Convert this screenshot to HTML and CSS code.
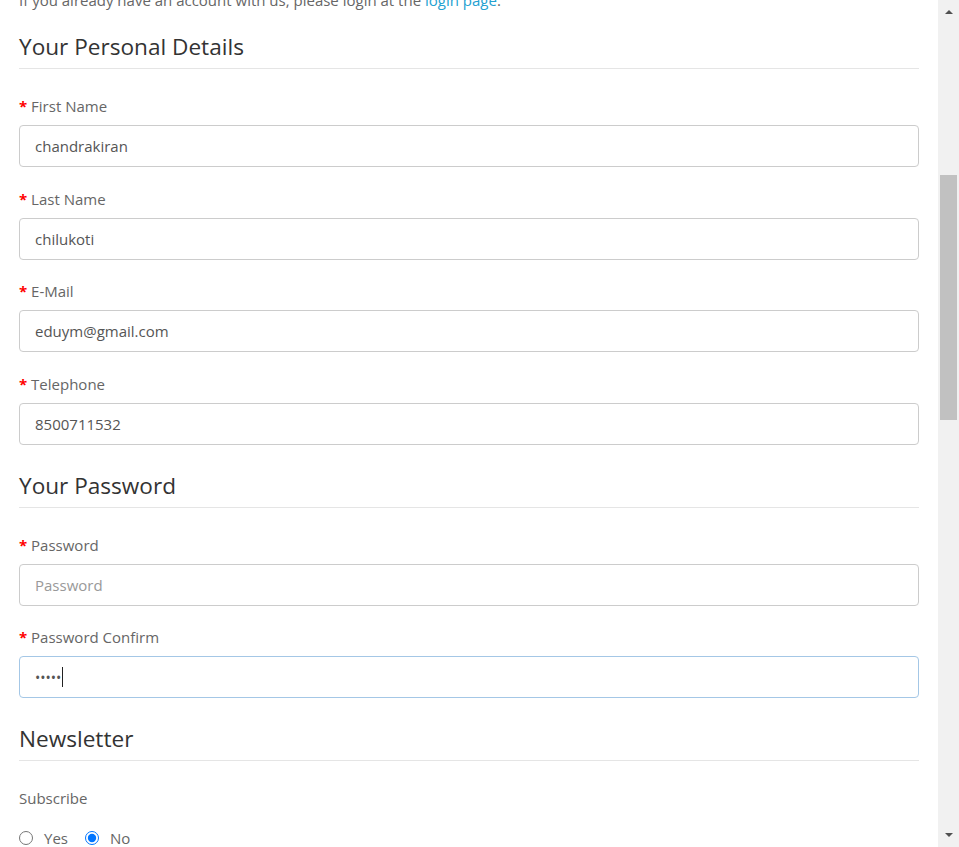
FILE: index.html
```html
<!DOCTYPE html>
<html lang="en">
<head>
<meta charset="utf-8">
<title>Register Account</title>
<link rel="stylesheet" href="styles.css">
</head>
<body>
<div class="window">
  <main class="main">
    <p class="intro">If you already have an account with us, please login at the <a href="#">login page</a>.</p>
    <form class="form">
      <fieldset class="section">
        <legend class="legend">Your Personal Details</legend>
        <div class="group">
          <label class="label"><span class="req">*</span> First Name</label>
          <input class="control" type="text" value="chandrakiran">
        </div>
        <div class="group">
          <label class="label"><span class="req">*</span> Last Name</label>
          <input class="control" type="text" value="chilukoti">
        </div>
        <div class="group">
          <label class="label"><span class="req">*</span> E-Mail</label>
          <input class="control" type="text" value="eduym@gmail.com">
        </div>
        <div class="group">
          <label class="label"><span class="req">*</span> Telephone</label>
          <input class="control" type="text" value="8500711532">
        </div>
      </fieldset>
      <fieldset class="section">
        <legend class="legend">Your Password</legend>
        <div class="group">
          <label class="label"><span class="req">*</span> Password</label>
          <input class="control" type="password" placeholder="Password">
        </div>
        <div class="group">
          <label class="label"><span class="req">*</span> Password Confirm</label>
          <div class="control focused"><span class="dots">•••••</span><span class="caret"></span></div>
        </div>
      </fieldset>
      <fieldset class="section">
        <legend class="legend">Newsletter</legend>
        <div class="group">
          <label class="label plain">Subscribe</label>
          <div class="radios">
            <label class="radio"><input type="radio" name="newsletter" value="1"> Yes</label>
            <label class="radio"><input type="radio" name="newsletter" value="0" checked> No</label>
          </div>
        </div>
      </fieldset>
    </form>
  </main>
  <div class="scrollbar">
    <div class="arrow up"></div>
    <div class="track"><div class="thumb"></div></div>
    <div class="arrow down"></div>
  </div>
</div>
</body>
</html>
```

FILE: styles.css
```css
* { box-sizing: border-box; }
html, body { margin: 0; padding: 0; }
body {
  font-family: "Open Sans", "Noto Sans", sans-serif;
  font-size: 15px;
  color: #666;
  background: #fff;
}
.window {
  display: flex;
  height: 847px;
  overflow: hidden;
}
.main {
  flex: 1;
  padding: 0 19px;
  overflow: hidden;
}
.intro {
  margin: -10px 0 22px;
  line-height: 20px;
  font-size: 15px;
  color: #666;
}
.intro a { color: #23a1d1; text-decoration: none; }
.form { margin: 0; }
.section {
  border: 0;
  margin: 0;
  padding: 0;
  min-width: 0;
}
.section + .section { margin-top: 4.5px; }
.legend {
  display: block;
  width: 100%;
  padding: 0 0 6px;
  margin: 0 0 27px;
  font-size: 22.6px;
  line-height: 30px;
  color: #333;
  border-bottom: 1px solid #e5e5e5;
}
.group {
  margin-bottom: 21.5px;
}
.label {
  display: block;
  line-height: 20px;
  margin-bottom: 9px;
  font-size: 15px;
  color: #666;
}
.label.plain { margin-bottom: 20px; }
.req { color: #f00; font-weight: bold; }
.control {
  display: block;
  width: 100%;
  height: 42px;
  padding: 0 15px;
  font-family: inherit;
  font-size: 15px;
  color: #555;
  background: #fff;
  border: 1px solid #ccc;
  border-radius: 4px;
  outline: none;
}
.control::placeholder { color: #999; }
.control.focused {
  display: flex;
  align-items: center;
  border-color: #a4c7e6;
}
.dots { font-size: 14px; letter-spacing: 0; color: #555; }
.caret {
  display: inline-block;
  width: 1px;
  height: 20px;
  background: #222;
  margin-left: 1px;
}
.radios { display: flex; gap: 18px; line-height: 20px; }
.radio { display: flex; align-items: center; gap: 11px; font-size: 15px; color: #666; }
.radio input { width: 14px; height: 14px; margin: 0; }
.radio + .radio input { margin-left: -1px; }
.scrollbar {
  width: 21px;
  flex: none;
  background: #f1f1f1;
  display: flex;
  flex-direction: column;
  align-items: center;
}
.arrow {
  width: 0; height: 0;
  border-left: 4px solid transparent;
  border-right: 4px solid transparent;
}
.arrow.up { border-bottom: 4px solid #505050; margin-top: 10px; }
.arrow.down { border-top: 4px solid #505050; margin-bottom: 10px; }
.track { flex: 1; width: 100%; padding: 161px 2px 0; }
.thumb { height: 245px; background: #c1c1c1; }
```
